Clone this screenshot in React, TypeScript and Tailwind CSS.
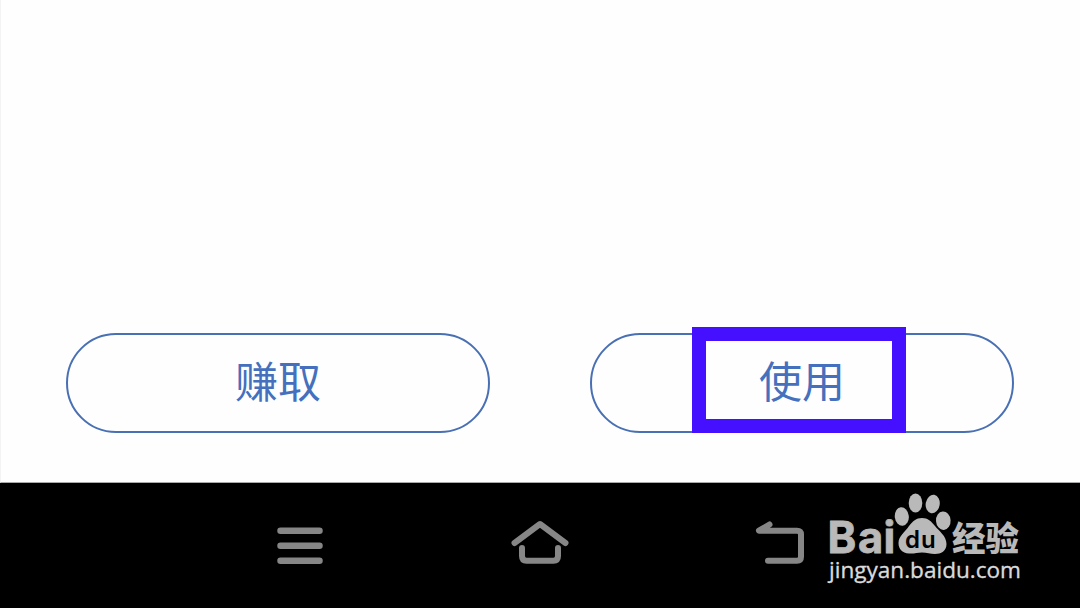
import type { ReactNode } from 'react'

function PillButton({ children }: { children: ReactNode }) {
  return (
    <button className="relative flex h-[100px] w-[424px] items-center justify-center rounded-full border-2 border-[#4a70b4] pb-[7px] text-[43px] leading-none text-[#4470bd]">
      {children}
    </button>
  )
}

function MenuIcon() {
  return (
    <svg width="80" height="80" viewBox="0 0 80 80" fill="none" stroke="#868686" strokeWidth="6.5" strokeLinecap="round">
      <path d="M20.5 25.7H59.5M20.5 40.7H59.5M20.5 55.7H59.5" />
    </svg>
  )
}

function HomeIcon() {
  return (
    <svg width="80" height="80" viewBox="0 0 80 80" fill="none" stroke="#868686" strokeWidth="6" strokeLinecap="round" strokeLinejoin="round">
      <path d="M14.5 38L40 19L65.5 38" />
      <path d="M22 43V51Q22 55.7 26.5 55.7H53.5Q58 55.7 58 51V43" />
    </svg>
  )
}

function BackIcon() {
  return (
    <svg width="80" height="80" viewBox="0 0 80 80" fill="none" stroke="#868686" strokeWidth="6" strokeLinecap="round" strokeLinejoin="round">
      <path d="M29.5 19.5L19 25.7H57Q61 25.7 61 29.5V51.7Q61 55.7 57 55.7H28" />
    </svg>
  )
}

function Watermark() {
  return (
    <svg className="absolute top-[487px] left-[824px]" width="204" height="106" viewBox="824 487 204 106" fill="#b9b9b9">
      <text x="827.5 858 883.5" y="553" fontSize="43.5" fontWeight="700" stroke="#b9b9b9" strokeWidth="0.8" className="font-['Inter',sans-serif]">
        Bai
      </text>
      <ellipse cx="901.8" cy="516.5" rx="7" ry="9.3" transform="rotate(-6 901.8 516.5)" />
      <ellipse cx="915.5" cy="503" rx="6.8" ry="9.5" />
      <ellipse cx="932.7" cy="504" rx="7" ry="9.3" transform="rotate(10 932.7 504)" />
      <ellipse cx="943.3" cy="520.7" rx="7.3" ry="9.2" transform="rotate(-4 943.3 520.7)" />
      <path d="M922 518C928 518 931 521 935 526C939 531 946.5 536 946.5 544C946.5 551 941 554 935 554C930 554 927 552.5 922 552.5C917 552.5 914 554 909 553.5C902 553 898.5 549 898.5 543C898.5 536 905 532 909 526C913 521 916 518 922 518Z" />
      <text x="905 921" y="548" fontSize="24" fontWeight="600" fill="#000" className="font-['Inter',sans-serif]">
        du
      </text>
      <text x="952" y="550.5" fontSize="34" fontWeight="900" textLength="67" lengthAdjust="spacingAndGlyphs" className="font-['Noto_Sans_CJK_SC',sans-serif]">
        经验
      </text>
      <text x="829" y="578" fontSize="22.5" fill="#dadada" stroke="#dadada" strokeWidth="0.35" textLength="192" lengthAdjust="spacingAndGlyphs" className="font-['Open_Sans',sans-serif]">
        jingyan.baidu.com
      </text>
    </svg>
  )
}

export default function App() {
  return (
    <div className="relative flex h-[608px] w-[1080px] flex-col overflow-hidden bg-black font-['Noto_Sans_CJK_SC',sans-serif]">
      <main className="flex h-[483px] items-end justify-between border-b border-l border-b-[#a8aaa8] border-l-[#f3f3f3] bg-[#fefefe] pr-[66px] pb-[49px] pl-[65px]">
        <PillButton>赚取</PillButton>
        <PillButton>
          使用
          <span className="absolute -top-2 left-[100px] h-[106px] w-[214px] border-[14px] border-[#4510ff]" />
        </PillButton>
      </main>
      <nav className="grid h-[124px] grid-cols-3 place-items-center px-[180px]">
        <MenuIcon />
        <HomeIcon />
        <BackIcon />
      </nav>
      <Watermark />
    </div>
  )
}
